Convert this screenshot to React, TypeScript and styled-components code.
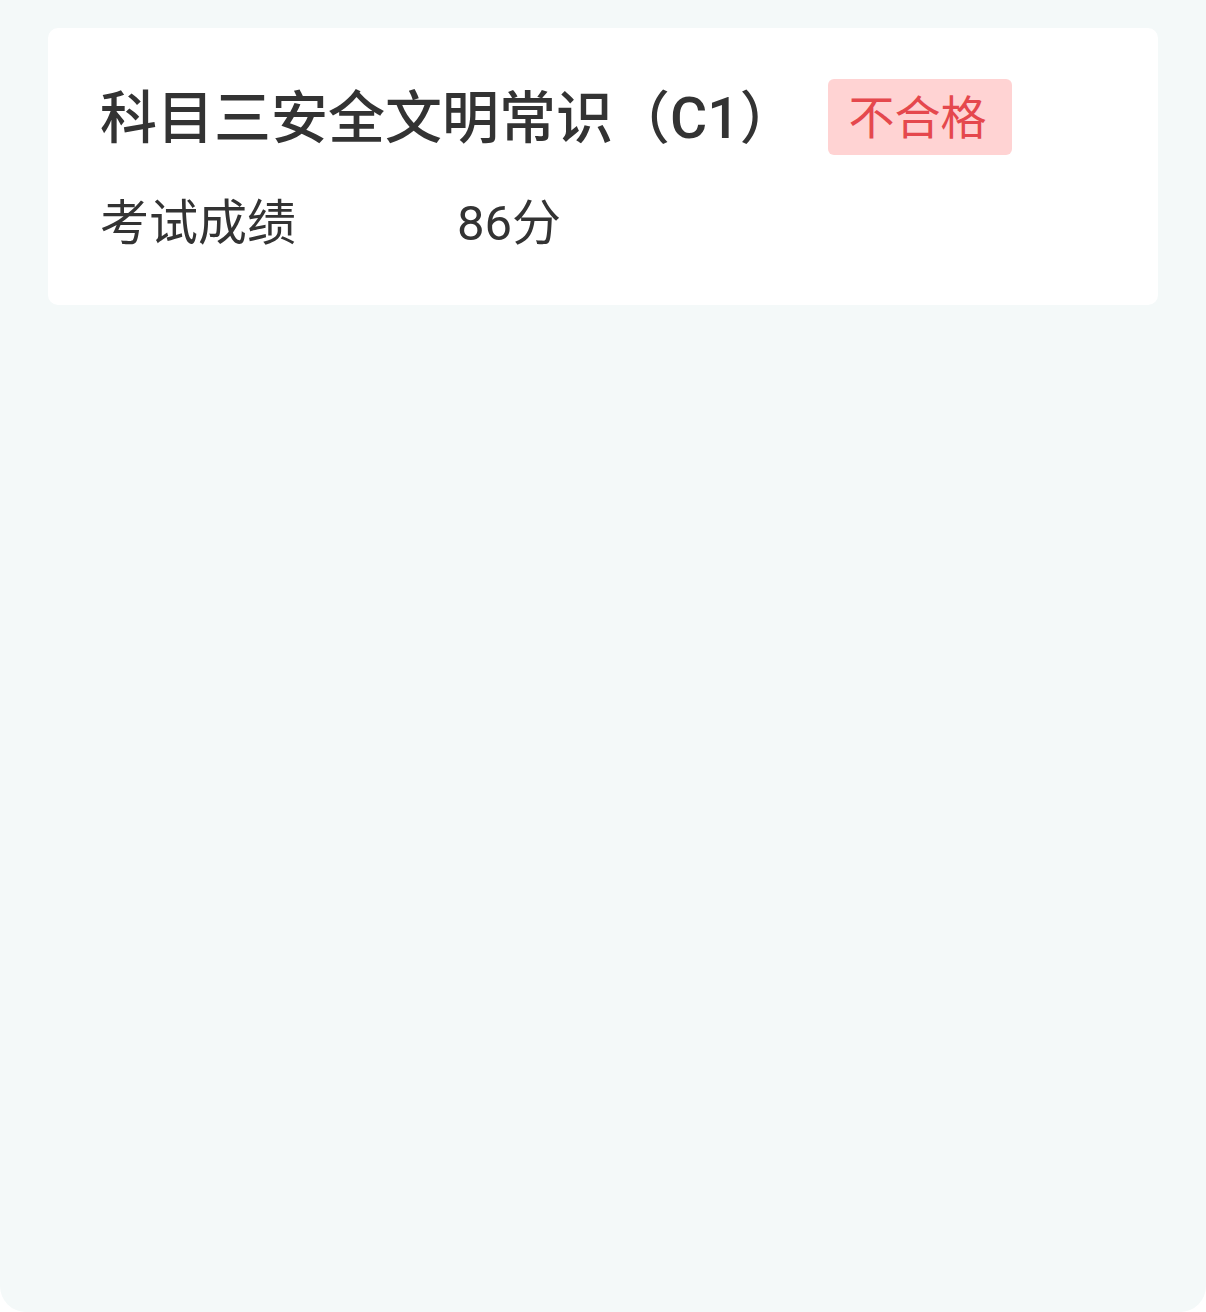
import React from 'react';
import styled, { createGlobalStyle } from 'styled-components';

const GlobalStyle = createGlobalStyle`
  html, body {
    margin: 0;
    padding: 0;
    background: #ffffff;
  }
  body {
    font-family: Roboto, "Noto Sans CJK SC", "Noto Sans", sans-serif;
  }
`;

const Page = styled.div`
  box-sizing: border-box;
  width: 1206px;
  height: 1312px;
  padding: 28px 48px;
  background: #f4f9f9;
  border-radius: 0 0 26px 26px;
`;

const Card = styled.div`
  background: #ffffff;
  border-radius: 10px;
  padding: 51px 52px 51px;
`;

const TitleRow = styled.div`
  display: flex;
  align-items: center;
  height: 76px;
`;

const Title = styled.span`
  font-size: 57px;
  font-weight: 500;
  color: #333333;
  line-height: 76px;
  white-space: nowrap;
  margin-top: 3px;
`;

const Badge = styled.span<{ $pass: boolean }>`
  display: inline-flex;
  align-items: center;
  box-sizing: border-box;
  height: 76px;
  margin-left: 31px;
  padding: 0 25px 7px 21px;
  border-radius: 6px;
  font-size: 46px;
  color: ${p => (p.$pass ? '#2fa36b' : '#e5484d')};
  background: ${p => (p.$pass ? '#d6f2e3' : '#ffd3d3')};
`;

const ScoreRow = styled.div`
  display: flex;
  align-items: center;
  margin-top: 33px;
  height: 66px;
  font-size: 49px;
  color: #333333;
  line-height: 60px;
`;

const Label = styled.span`
  width: 357px;
  flex-shrink: 0;
  margin-top: 5px;
`;

const Value = styled.span`
  margin-top: 5px;
`;

type Props = {
  subject: string;
  score: number;
  passed: boolean;
};

const ResultCard: React.FC<Props> = ({ subject, score, passed }) => (
  <Card>
    <TitleRow>
      <Title>{subject}</Title>
      <Badge $pass={passed}>{passed ? '合格' : '不合格'}</Badge>
    </TitleRow>
    <ScoreRow>
      <Label>考试成绩</Label>
      <Value>{`${score}分`}</Value>
    </ScoreRow>
  </Card>
);

export default function App() {
  return (
    <>
      <GlobalStyle />
      <Page>
        <ResultCard subject="科目三安全文明常识（C1）" score={86} passed={false} />
      </Page>
    </>
  );
}
